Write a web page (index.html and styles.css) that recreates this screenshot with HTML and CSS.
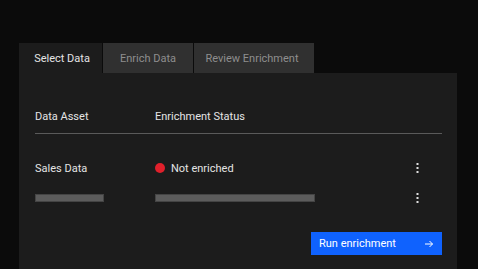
FILE: index.html
```html
<!DOCTYPE html>
<html lang="en">
<head>
  <meta charset="UTF-8" />
  <title>Data Enrichment</title>
  <link rel="stylesheet" href="styles.css">
</head>
<body>

<div class="wrapper">
  <div class="tabs">
    <div class="tab active tab-select">Select Data</div>
    <div class="tab tab-enrich">Enrich Data</div>
    <div class="tab tab-review">Review Enrichment</div>
  </div>

  <div class="panel">
    <div class="grid header">
      <div>Data Asset</div>
      <div>Enrichment Status</div>
      <div></div>
    </div>

    <div class="grid row">
      <div>Sales Data</div>
      <div class="status"><span class="dot"></span>Not enriched</div>
      <svg class="kebab" width="16" height="16" viewBox="0 0 16 16">
        <rect x="6.5" y="3" width="2" height="2" fill="#e0e0e0"/>
        <rect x="6.5" y="7" width="2" height="2" fill="#e0e0e0"/>
        <rect x="6.5" y="11" width="2" height="2" fill="#e0e0e0"/>
      </svg>
    </div>

    <div class="grid row">
      <div><span class="skeleton short"></span></div>
      <div><span class="skeleton long"></span></div>
      <svg class="kebab" width="16" height="16" viewBox="0 0 16 16">
        <rect x="6.5" y="3" width="2" height="2" fill="#e0e0e0"/>
        <rect x="6.5" y="7" width="2" height="2" fill="#e0e0e0"/>
        <rect x="6.5" y="11" width="2" height="2" fill="#e0e0e0"/>
      </svg>
    </div>

    <div class="actions">
      <button class="run-btn">
        <span>Run enrichment</span>
        <svg width="10" height="10" viewBox="0 0 10 10">
          <path d="M1 5 H8.5 M5.5 2 L8.5 5 L5.5 8" stroke="#fff" stroke-width="1" fill="none"/>
        </svg>
      </button>
    </div>
  </div>
</div>

</body>
</html>
```

FILE: styles.css
```css
* {
  box-sizing: border-box;
}

body {
  margin: 0;
  background: #0b0b0b;
  font-family: 'Roboto', 'Noto Sans', sans-serif;
  font-size: 11px;
  color: #e4e4e4;
  height: 269px;
  overflow: hidden;
}

.wrapper {
  padding: 43px 0 0 19px;
  width: 457px;
}

.tabs {
  display: flex;
  gap: 1px;
  height: 30px;
}

.tab {
  display: flex;
  align-items: center;
  justify-content: center;
  background: #303030;
  color: #8e8e8e;
}

.tab.active {
  background: #1c1c1c;
  color: #e4e4e4;
  padding-left: 3px;
}

.tab-select { width: 83px; }
.tab-enrich { width: 90px; }
.tab-review { width: 120px; padding-right: 4px; }

.panel {
  background: #1c1c1c;
  padding: 35px 15px 30px 16px;
}

.grid {
  display: grid;
  grid-template-columns: 120px 1fr 48px;
  align-items: center;
}

.header {
  height: 26px;
  padding-bottom: 9px;
  border-bottom: 1px solid #5a5a5a;
  margin-bottom: 19px;
}

.row {
  height: 30px;
}

.status {
  display: flex;
  align-items: center;
  gap: 6px;
}

.dot {
  width: 10px;
  height: 10px;
  border-radius: 50%;
  background: #e0202b;
}

.kebab {
  justify-self: center;
}

.skeleton {
  display: block;
  height: 8px;
  background: #5c5c5c;
  border: 1px solid #444;
}

.skeleton.short { width: 69px; }
.skeleton.long { width: 160px; }

.actions {
  display: flex;
  justify-content: flex-end;
  margin-top: 19px;
}

.run-btn {
  width: 131px;
  height: 23px;
  border: none;
  background: #0f62fe;
  color: #fff;
  font-family: inherit;
  font-size: 11px;
  display: flex;
  align-items: center;
  justify-content: space-between;
  padding: 0 8px 0 8px;
}
```
